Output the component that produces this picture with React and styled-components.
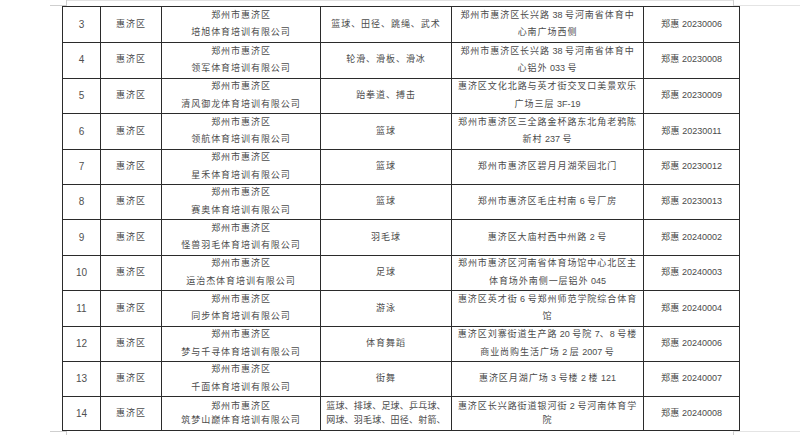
import React from 'react';
import styled, { createGlobalStyle } from 'styled-components';

const GlobalStyle = createGlobalStyle`
  html, body {
    margin: 0;
    padding: 0;
    background: #fff;
  }
  body {
    width: 800px;
    height: 435px;
    overflow: hidden;
    font-family: "Liberation Sans", "Noto Sans CJK SC", sans-serif;
  }
`;

const MARK = '#cfcfcf';

const Page = styled.div`
  width: 800px;
  height: 435px;
  overflow: hidden;
  display: flex;
  flex-direction: column;
`;

const MarginStrip = styled.div`
  display: flex;
  height: ${(p) => p.h}px;
  flex-shrink: 0;
`;

const CornerLeft = styled.div`
  margin-left: 50px;
  width: 16px;
  border-right: 1px solid ${MARK};
  ${(p) => (p.bottom ? `border-top: 1px solid ${MARK};` : `border-bottom: 1px solid ${MARK};`)}
`;

const EdgeLine = styled.div`
  flex: 1;
  ${(p) => (p.show ? `border-top: 1px solid #e2e2e2;` : '')}
`;

const CornerRight = styled.div`
  width: 66px;
  border-left: 1px solid ${MARK};
  ${(p) => (p.bottom ? `border-top: 1px solid #e4e4e4;` : `border-bottom: 1px solid #e4e4e4;`)}
`;

const Table = styled.div`
  margin-left: 62px;
  width: 678px;
  box-sizing: border-box;
  border-top: 1px solid #2b2b2b;
  border-left: 1px solid #2b2b2b;
  flex-shrink: 0;
`;

const Row = styled.div`
  display: grid;
  grid-template-columns: 38px 61px 159px 131px 192px 96px;
  height: ${(p) => p.h}px;
`;

const Cell = styled.div`
  box-sizing: border-box;
  border-right: 1px solid #2b2b2b;
  border-bottom: 1px solid #2b2b2b;
  display: flex;
  flex-direction: column;
  align-items: center;
  justify-content: center;
  text-align: center;
  color: #4b4b4b;
  font-size: 9px;
  line-height: ${(p) => (p.dense ? 14 : 17.5)}px;
  letter-spacing: ${(p) => (p.tight ? 0.2 : 0.95)}px;
  white-space: nowrap;
  overflow: hidden;
`;

const NumCell = styled(Cell)`
  font-size: 10px;
  letter-spacing: 0;
  color: #505050;
`;

const Latin = styled.span`
  letter-spacing: 0;
`;

const Line = styled.span`
  display: block;
`;

const Txt = ({ s }) =>
  s.split(/([A-Za-z0-9\- ]+)/).map((p, i) =>
    /[A-Za-z0-9]/.test(p) ? <Latin key={i}>{p}</Latin> : p
  );

const Lines = ({ v }) =>
  (Array.isArray(v) ? v : [v]).map((l, i) => (
    <Line key={i}>
      <Txt s={l} />
    </Line>
  ));

const rows = [
  ['3', '惠济区', ['郑州市惠济区', '培旭体育培训有限公司'], '篮球、田径、跳绳、武术', ['郑州市惠济区长兴路 38 号河南省体育中', '心南广场西侧'], '郑惠 20230006'],
  ['4', '惠济区', ['郑州市惠济区', '领军体育培训有限公司'], '轮滑、滑板、滑冰', ['郑州市惠济区长兴路 38 号河南省体育中', '心铝外 033 号'], '郑惠 20230008'],
  ['5', '惠济区', ['郑州市惠济区', '清风御龙体育培训有限公司'], '跆拳道、搏击', ['惠济区文化北路与英才街交叉口美景欢乐', '广场三层 3F-19'], '郑惠 20230009'],
  ['6', '惠济区', ['郑州市惠济区', '领航体育培训有限公司'], '篮球', ['郑州市惠济区三全路金杯路东北角老鸦陈', '新村 237 号'], '郑惠 20230011'],
  ['7', '惠济区', ['郑州市惠济区', '星禾体育培训有限公司'], '篮球', '郑州市惠济区碧月月湖荣园北门', '郑惠 20230012'],
  ['8', '惠济区', ['郑州市惠济区', '赛奥体育培训有限公司'], '篮球', '郑州市惠济区毛庄村南 6 号厂房', '郑惠 20230013'],
  ['9', '惠济区', ['郑州市惠济区', '怪兽羽毛体育培训有限公司'], '羽毛球', '惠济区大庙村西中州路 2 号', '郑惠 20240002'],
  ['10', '惠济区', ['郑州市惠济区', '运治杰体育培训有限公司'], '足球', ['郑州市惠济区河南省体育场馆中心北区主', '体育场外南侧一层铝外 045'], '郑惠 20240003'],
  ['11', '惠济区', ['郑州市惠济区', '同步体育培训有限公司'], '游泳', ['惠济区英才街 6 号郑州师范学院综合体育', '馆'], '郑惠 20240004'],
  ['12', '惠济区', ['郑州市惠济区', '梦与千寻体育培训有限公司'], '体育舞蹈', ['惠济区刘寨街道生产路 20 号院 7、8 号楼', '商业尚购生活广场 2 层 2007 号'], '郑惠 20240006'],
  ['13', '惠济区', ['郑州市惠济区', '千面体育培训有限公司'], '街舞', '惠济区月湖广场 3 号楼 2 楼 121', '郑惠 20240007'],
  ['14', '惠济区', ['郑州市惠济区', '筑梦山巅体育培训有限公司'], ['篮球、排球、足球、乒乓球、', '网球、羽毛球、田径、射箭、'], ['惠济区长兴路街道银河街 2 号河南体育学', '院'], '郑惠 20240008'],
];

const heights = [35.5, 36, 35.5, 35.5, 35, 35.5, 35.5, 35.5, 35.5, 35, 35, 34.5];

export default function App() {
  return (
    <Page>
      <GlobalStyle />
      <MarginStrip h={6}>
        <CornerLeft />
        <EdgeLine show />
        <CornerRight />
      </MarginStrip>
      <Table>
        {rows.map((r, i) => {
          const dense = r[0] === '14';
          return (
            <Row key={r[0]} h={heights[i]}>
              <NumCell>{r[0]}</NumCell>
              <Cell>{r[1]}</Cell>
              <Cell dense={dense}>
                <Lines v={r[2]} />
              </Cell>
              <Cell dense={dense} tight={dense}>
                <Lines v={r[3]} />
              </Cell>
              <Cell dense={dense}>
                <Lines v={r[4]} />
              </Cell>
              <Cell tight>
                <Lines v={r[5]} />
              </Cell>
            </Row>
          );
        })}
      </Table>
      <MarginStrip h={5}>
        <CornerLeft bottom />
        <EdgeLine />
        <CornerRight bottom />
      </MarginStrip>
    </Page>
  );
}
